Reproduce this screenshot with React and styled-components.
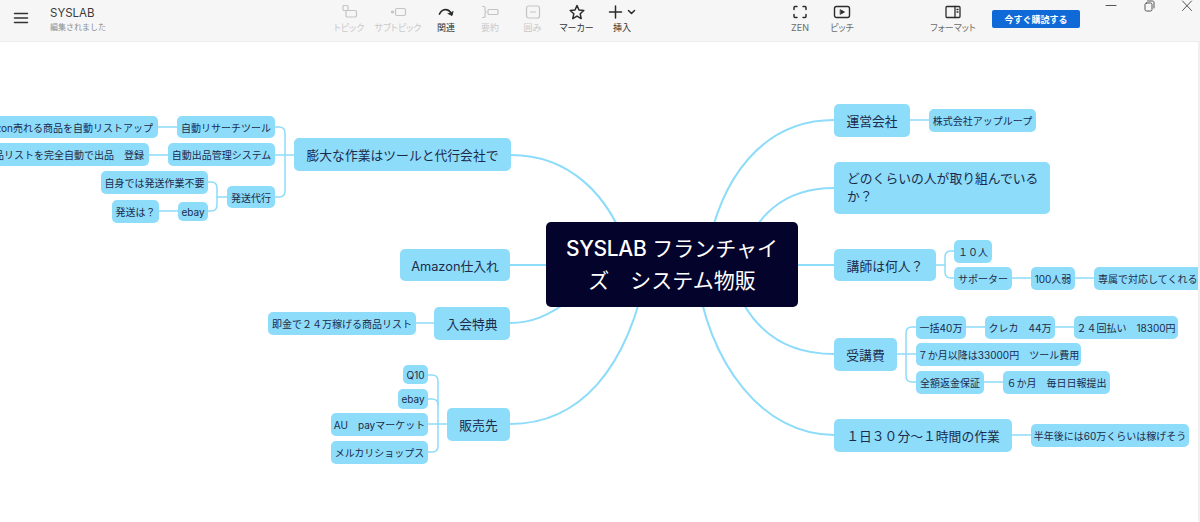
import React from "react";
import styled, { createGlobalStyle } from "styled-components";

const FONT = `Inter, "Noto Sans CJK JP", "Noto Sans", sans-serif`;

const Global = createGlobalStyle`
  html, body { margin: 0; padding: 0; background: #fff; overflow: hidden; }
  body { font-family: ${FONT}; }
`;

const Page = styled.div`
  width: 1200px;
  height: 522px;
  display: flex;
  flex-direction: column;
  background: #fff;
`;

const TopBar = styled.header`
  height: 41px;
  flex: none;
  display: flex;
  background: #f6f6f6;
  border-bottom: 1px solid #ececec;
`;

const MenuSlot = styled.div`
  width: 42px;
  height: 36px;
  display: flex;
  align-items: center;
  justify-content: center;
  color: #333;
`;

const TitleBlock = styled.div`
  width: 275px;
  padding: 6px 0 0 8px;
  display: flex;
  flex-direction: column;
`;

const Title = styled.div`
  font-size: 11.5px;
  line-height: 15px;
  color: #3a3a3a;
`;

const Subtitle = styled.div`
  font-size: 8px;
  line-height: 13px;
  color: #8d8d8d;
`;

const Tool = styled.div`
  width: ${(p) => p.$w}px;
  flex: none;
  display: flex;
  flex-direction: column;
  align-items: center;
  padding-top: 3px;
  color: ${(p) => (p.$off ? "#c4c4c4" : "#2b2b2b")};
`;

const ToolIcon = styled.div`
  height: 18px;
  display: flex;
  align-items: center;
  justify-content: center;
`;

const ToolLabel = styled.div`
  margin-top: 1px;
  font-size: 9px;
  line-height: 12px;
  font-feature-settings: "palt";
  white-space: nowrap;
  color: ${(p) => (p.$off ? "#c9c9c9" : p.$mid ? "#6b6b6b" : "#333")};
`;

const Gap = styled.div`
  width: ${(p) => p.$w}px;
  flex: none;
`;

const ReadButton = styled.button`
  width: 88px;
  height: 18px;
  margin-top: 10px;
  flex: none;
  border: 0;
  border-radius: 2px;
  padding: 0;
  background: #0f6ad8;
  color: #fff;
  font-family: ${FONT};
  font-size: 9px;
  font-weight: 700;
`;

const WindowControls = styled.div`
  flex: 1;
  display: flex;
  gap: 24px;
  padding: 0 0 0 24px;
  height: 12px;
  color: #555;
`;

const Canvas = styled.main`
  position: relative;
  width: 1198px;
  flex: 1;
  overflow: hidden;
  background: #fff;
  border-right: 2px solid #f0f0f0;
`;

const Lines = styled.svg`
  position: absolute;
  inset: 0;
  width: 1198px;
  height: 480px;
`;

const Box = styled.div`
  position: absolute;
  left: ${(p) => p.$x}px;
  top: ${(p) => p.$y - 42}px;
  width: ${(p) => p.$w}px;
  height: ${(p) => p.$h}px;
  box-sizing: border-box;
  display: flex;
  align-items: center;
  white-space: nowrap;
  background: #8ddcfa;
  color: #1c2b4c;
`;

const TopicNode = styled(Box)`
  justify-content: center;
  border-radius: 5px;
  font-size: 12.8px;
`;

const WrapTopicNode = styled(Box)`
  padding: 0 13px;
  border-radius: 5px;
  font-size: 12.8px;
  line-height: 18px;
`;

const SubNode = styled(Box)`
  justify-content: ${(p) => p.$align || "center"};
  padding: ${(p) => (p.$align === "flex-end" ? "0 5px 0 0" : p.$align ? "0 0 0 4px" : "0")};
  border-radius: 5px;
  font-size: 10px;
`;

const RootNode = styled(Box)`
  justify-content: center;
  text-align: center;
  border-radius: 5px;
  background: #03032b;
  color: #fff;
  font-size: 21px;
  line-height: 32px;
`;

const RootStrong = styled.span`
  font-weight: 500;
  letter-spacing: -0.3px;
`;

const topics = [
  [294, 138, 217, 33, "膨大な作業はツールと代行会社で"],
  [400, 249, 110, 32, "Amazon仕入れ"],
  [434, 307, 76, 33, "入会特典"],
  [447, 408, 63, 33, "販売先"],
  [834, 104, 76, 33, "運営会社"],
  [834, 249, 102, 32, "講師は何人？"],
  [834, 338, 63, 33, "受講費"],
  [834, 419, 178, 33, "１日３０分～１時間の作業"],
];

const subs = [
  [-40, 116, 198, 22, "Amazon売れる商品を自動リストアップ", "flex-end"],
  [177, 116, 98, 22, "自動リサーチツール"],
  [-40, 143, 189, 23, "出品リストを完全自動で出品　登録", "flex-end"],
  [168, 143, 107, 23, "自動出品管理システム"],
  [227, 186, 48, 22, "発送代行"],
  [101, 171, 107, 23, "自身では発送作業不要"],
  [178, 202, 30, 19, "ebay"],
  [112, 200, 47, 23, "発送は？"],
  [268, 312, 148, 23, "即金で２４万稼げる商品リスト"],
  [403, 365, 25, 19, "Q10"],
  [398, 389, 30, 20, "ebay"],
  [331, 413, 97, 23, "AU　payマーケット"],
  [331, 441, 97, 23, "メルカリショップス"],
  [929, 109, 107, 23, "株式会社アップループ"],
  [954, 240, 38, 23, "１０人"],
  [954, 267, 58, 23, "サポーター"],
  [1031, 267, 44, 23, "100人弱"],
  [1094, 267, 150, 23, "専属で対応してくれる人", "flex-start"],
  [916, 316, 50, 23, "一括40万"],
  [985, 316, 70, 23, "クレカ　44万"],
  [1074, 316, 104, 23, "２４回払い　18300円"],
  [916, 343, 165, 23, "７か月以降は33000円　ツール費用"],
  [916, 371, 68, 23, "全額返金保証"],
  [1003, 371, 107, 23, "６か月　毎日日報提出"],
  [1031, 424, 158, 23, "半年後には60万くらいは稼げそう"],
];

const mainPaths = [
  "M705 265C718 175 765 120 834 120",
  "M740 265C752 215 785 188 834 188",
  "M798 265H834",
  "M728 265C744 325 780 354 834 354",
  "M695 265C708 368 765 435 834 435",
  "M511 155C565 155 612 190 632 265",
  "M510 265H546",
  "M510 323C530 323 548 317 572 298",
  "M510 424C578 424 628 372 648 265",
];

const branchPaths = [
  "M275 127h4q6 0 6 6V191q0 6 -6 6h-4",
  "M294 155H275",
  "M158 127H177",
  "M149 155H168",
  "M208 182h3q6 0 6 6V205q0 6 -6 6h-3",
  "M217 197H227",
  "M159 211H178",
  "M416 323H434",
  "M428 375h4q6 0 6 6V446q0 6 -6 6h-4",
  "M428 399h4q6 0 6 6",
  "M428 424H447",
  "M910 120H929",
  "M954 251h-3q-6 0 -6 6V272q0 6 6 6h3",
  "M936 265H945",
  "M1012 278H1031",
  "M1075 278H1094",
  "M916 327h-4q-6 0 -6 6V376q0 6 6 6h4",
  "M897 354H916",
  "M966 327H985",
  "M1055 327H1074",
  "M984 382H1003",
  "M1012 435H1031",
];

const Svg = ({ w = 18, h = 16, children, sw = 1.2 }) => (
  <svg width={w} height={h} viewBox={`0 0 ${w} ${h}`} fill="none" stroke="currentColor" strokeWidth={sw} strokeLinecap="round" strokeLinejoin="round">
    {children}
  </svg>
);

const MenuIcon = () => (
  <Svg w={16} h={14} sw={1.5}>
    <path d="M1.5 2.5H14.5M1.5 7H14.5M1.5 11.500H14.5" />
  </Svg>
);
const TopicIcon = () => (
  <Svg>
    <rect x="3" y="1.500" width="5" height="5" rx="1" />
    <rect x="6" y="6.500" width="10.500" height="6.500" rx="1.2" fill="#f6f6f6" />
  </Svg>
);
const SubtopicIcon = () => (
  <Svg>
    <circle cx="3.5" cy="8" r="1" fill="currentColor" />
    <rect x="6.5" y="4.5" width="10" height="7" rx="1.5" />
  </Svg>
);
const RelationIcon = () => (
  <Svg sw={1.7}>
    <path d="M2.5 10C5 4.5 11 3.8 14.5 9.5" />
    <path d="M11 9.5L15 11.5L16 7.5" fill="currentColor" strokeWidth="1" />
  </Svg>
);
const SummaryIcon = () => (
  <Svg>
    <path d="M1.5 2.5H3a1 1 0 0 1 1 1V7l1 1-1 1v3.5a1 1 0 0 1-1 1H1.5" />
    <rect x="7" y="5.5" width="10" height="5" rx="1" />
  </Svg>
);
const BoundaryIcon = () => (
  <Svg w={16}>
    <rect x="1.5" y="2" width="13" height="12" rx="2" />
    <path d="M5.5 8H10.5" />
  </Svg>
);
const StarIcon = () => (
  <Svg w={18} sw={1.5}>
    <path d="M9 1.5L11 6L15.8 6.5L12.2 9.8L13.2 14.6L9 12.1L4.8 14.6L5.8 9.8L2.2 6.5L7 6Z" />
  </Svg>
);
const InsertIcon = () => (
  <Svg w={28} sw={1.5}>
    <path d="M7.5 2V14M1.5 8H13.5" />
    <path d="M20.5 6.5L23.5 9.5L26.5 6.5" />
  </Svg>
);
const ZenIcon = () => (
  <Svg w={16} sw={1.5}>
    <path d="M5 2.5H3a1 1 0 0 0-1 1V5.5M11 2.5H13a1 1 0 0 1 1 1V5.5M5 13.5H3a1 1 0 0 1-1-1V10.5M11 13.5H13a1 1 0 0 0 1-1V10.5" />
  </Svg>
);
const PitchIcon = () => (
  <Svg w={18} sw={1.4}>
    <rect x="1.5" y="2.5" width="15" height="11" rx="2" />
    <path d="M7.5 5.8L11.5 8L7.5 10.2Z" fill="currentColor" strokeWidth="0.8" />
  </Svg>
);
const FormatIcon = () => (
  <Svg w={16} sw={1.3}>
    <rect x="1" y="2.5" width="14" height="11" rx="1" />
    <path d="M10 2.5V13.5M12 5.5H13M12 8H13" />
  </Svg>
);

const tools = [
  { w: 48, label: "トピック", off: true, Icon: TopicIcon },
  { w: 50, label: "サブトピック", off: true, Icon: SubtopicIcon },
  { w: 46, label: "関連", Icon: RelationIcon },
  { w: 42, label: "要約", off: true, Icon: SummaryIcon },
  { w: 43, label: "囲み", off: true, Icon: BoundaryIcon },
  { w: 45, label: "マーカー", Icon: StarIcon },
  { w: 46, label: "挿入", Icon: InsertIcon },
];

export default function App() {
  return (
    <Page>
      <Global />
      <TopBar>
        <MenuSlot>
          <MenuIcon />
        </MenuSlot>
        <TitleBlock>
          <Title>SYSLAB</Title>
          <Subtitle>編集されました</Subtitle>
        </TitleBlock>
        {tools.map(({ w, label, off, Icon }) => (
          <Tool key={label} $w={w} $off={off}>
            <ToolIcon>
              <Icon />
            </ToolIcon>
            <ToolLabel $off={off}>{label}</ToolLabel>
          </Tool>
        ))}
        <Gap $w={134} />
        <Tool $w={42}>
          <ToolIcon>
            <ZenIcon />
          </ToolIcon>
          <ToolLabel $mid>ZEN</ToolLabel>
        </Tool>
        <Tool $w={42}>
          <ToolIcon>
            <PitchIcon />
          </ToolIcon>
          <ToolLabel $mid>ピッチ</ToolLabel>
        </Tool>
        <Gap $w={62} />
        <Tool $w={56}>
          <ToolIcon>
            <FormatIcon />
          </ToolIcon>
          <ToolLabel $mid>フォーマット</ToolLabel>
        </Tool>
        <Gap $w={11} />
        <ReadButton>今すぐ購読する</ReadButton>
        <WindowControls>
          <Svg w={14} h={12} sw={1}>
            <path d="M2 5.5H12" />
          </Svg>
          <Svg w={14} h={12} sw={1}>
            <rect x="3" y="3" width="7" height="8" rx="1.5" />
            <path d="M5.5 1H10.5a1.5 1.5 0 0 1 1.5 1.500V8" />
          </Svg>
          <Svg w={14} h={12} sw={1}>
            <path d="M2.500 1L11.500 10.500M11.500 1L2.500 10.500" />
          </Svg>
        </WindowControls>
      </TopBar>
      <Canvas>
        <Lines viewBox="0 42 1198 480" fill="none" stroke="#8ddcfa" strokeLinecap="round">
          {mainPaths.map((d) => (
            <path key={d} d={d} strokeWidth="2" />
          ))}
          {branchPaths.map((d) => (
            <path key={d} d={d} strokeWidth="1.5" />
          ))}
        </Lines>
        {topics.map(([x, y, w, h, t]) => (
          <TopicNode key={t} $x={x} $y={y} $w={w} $h={h}>
            {t}
          </TopicNode>
        ))}
        <WrapTopicNode $x={834} $y={162} $w={216} $h={52}>
          <div>
            どのくらいの人が取り組んでいる
            <br />
            か？
          </div>
        </WrapTopicNode>
        {subs.map(([x, y, w, h, t, a]) => (
          <SubNode key={`${t}${y}`} $x={x} $y={y} $w={w} $h={h} $align={a}>
            {t}
          </SubNode>
        ))}
        <RootNode $x={546} $y={222} $w={252} $h={85}>
          <div>
            <RootStrong>SYSLAB</RootStrong> フランチャイ
            <br />
            ズ　システム物販
          </div>
        </RootNode>
      </Canvas>
    </Page>
  );
}
